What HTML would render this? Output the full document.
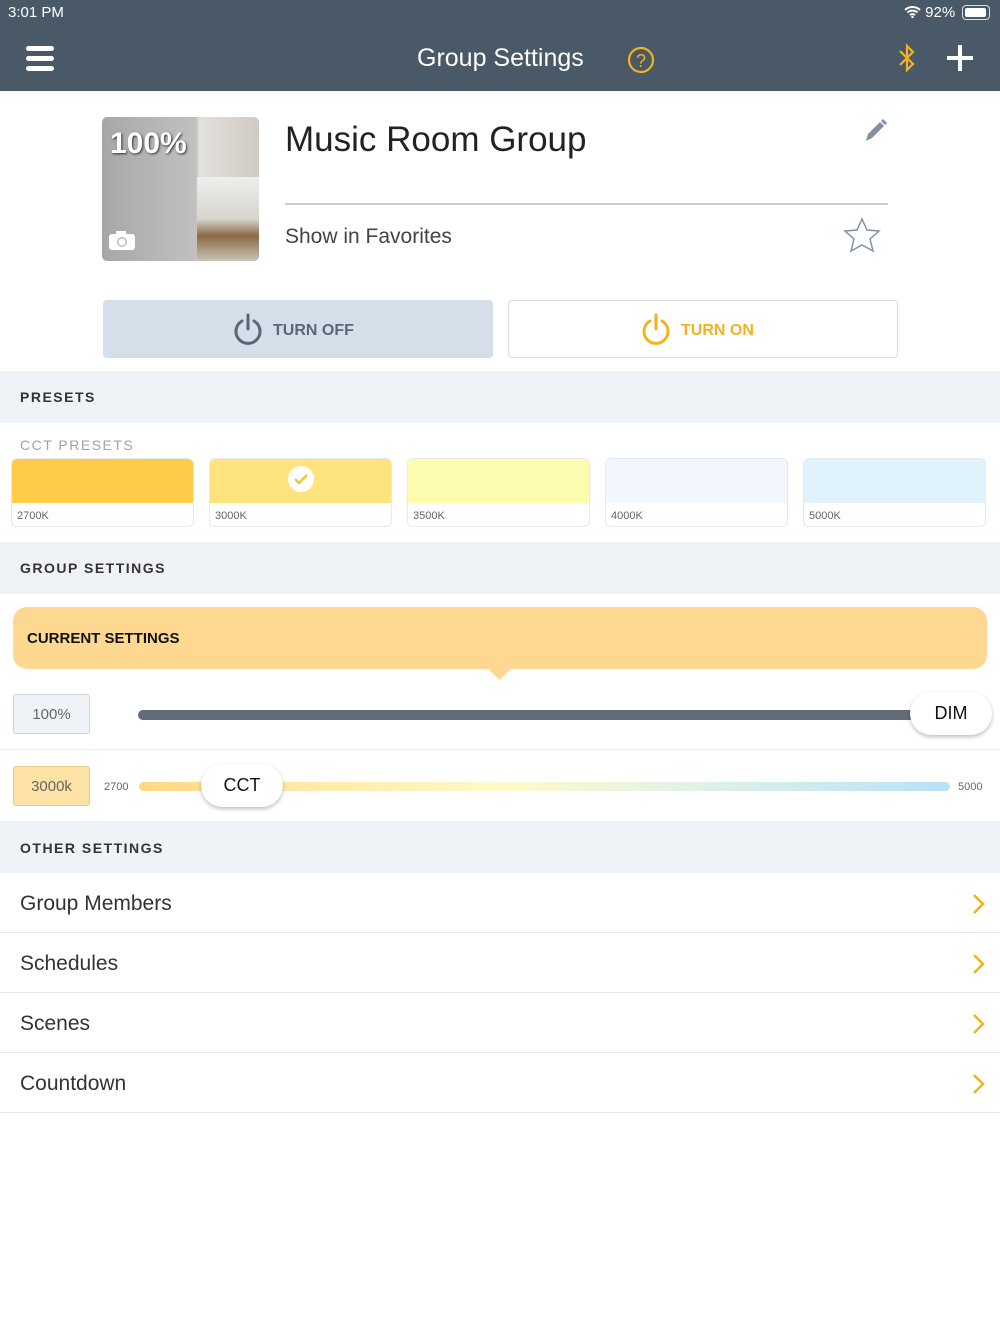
<!DOCTYPE html>
<html><head><meta charset="utf-8"><style>
*{box-sizing:border-box;margin:0;padding:0}
body{width:1000px;height:1334px;background:#fff;font-family:"Liberation Sans",sans-serif;position:relative;overflow:hidden;color:#222}
.abs{position:absolute}
.hdr{left:0;top:0;width:1000px;height:91px;background:#4a5968}
.sec{left:0;width:1000px;background:#eff2f7;font-size:14px;font-weight:bold;letter-spacing:1.5px;color:#333;padding-left:20px}
.preset{top:458px;width:183px;height:69px;border:1px solid #e6e9ed;border-radius:6px;overflow:hidden;background:#fff}
.preset div{height:44px}
.preset span{position:absolute;left:5px;top:51px;font-size:11px;color:#666}
.row{left:0;width:1000px;height:60px;border-bottom:1px solid #e4e6ea;font-size:21px;color:#333;padding-left:20px;line-height:62px}
.chev{position:absolute;right:14px;top:20px}
</style></head><body>
<div class="abs hdr"></div>
<div class="abs" style="left:8px;top:4px;color:#fff;font-size:15px">3:01 PM</div>
<div class="abs" style="left:904px;top:4px;color:#fff;font-size:15px">
<svg width="17" height="13" viewBox="0 0 17 13" style="vertical-align:-1px"><path d="M1 5a11 11 0 0 1 15 0M3.5 7.5a7.5 7.5 0 0 1 10 0M6 10a4 4 0 0 1 5 0" stroke="#fff" stroke-width="2" fill="none"/><circle cx="8.5" cy="12" r="1.2" fill="#fff"/></svg> 92%</div>
<div class="abs" style="left:962px;top:5px;width:28px;height:15px;border:1.5px solid #ddd;border-radius:4px;padding:1.5px"><div style="width:21px;height:9px;background:#fff;border-radius:2px"></div></div>
<div class="abs" style="left:26px;top:46px;width:28px;height:5px;background:#fff;border-radius:3px"></div>
<div class="abs" style="left:26px;top:56px;width:28px;height:5px;background:#fff;border-radius:3px"></div>
<div class="abs" style="left:26px;top:66px;width:28px;height:5px;background:#fff;border-radius:3px"></div>
<div class="abs" style="left:417px;top:44px;color:#fff;font-size:25px">Group Settings</div>
<svg class="abs" style="left:627px;top:46px" width="28" height="28" viewBox="0 0 28 28"><circle cx="14" cy="14" r="12" stroke="#f5b21f" stroke-width="2.2" fill="none"/><text x="14" y="21" text-anchor="middle" font-size="18" fill="#f5b21f" font-family="Liberation Sans">?</text></svg>
<svg class="abs" style="left:897px;top:43px" width="20" height="30" viewBox="0 0 20 30"><path d="M3 8l13 13-6 6V3l6 6L3 22" stroke="#f5b21f" stroke-width="2.2" fill="none"/></svg>
<svg class="abs" style="left:946px;top:44px" width="28" height="28"><path d="M14 1v26M1 14h26" stroke="#fff" stroke-width="4"/></svg>

<div class="abs" style="left:102px;top:117px;width:157px;height:144px;border-radius:5px;overflow:hidden;background:linear-gradient(90deg,#a8a7a5 0%,#c2c1bf 60%,#e3e1dc 62%,#cfcac2 100%)">
<div style="position:absolute;left:95px;top:60px;width:62px;height:84px;background:linear-gradient(#eee 0%,#d8d4ce 50%,#8b6a45 70%,#c9c3b8 100%)"></div>
<div style="position:absolute;left:8px;top:10px;color:#fff;font-size:30px;font-weight:bold;text-shadow:1px 1px 2px #333">100%</div>
<svg style="position:absolute;left:6px;top:112px" width="28" height="22"><rect x="1" y="5" width="26" height="16" rx="3" fill="#fff"/><rect x="8" y="2" width="10" height="5" fill="#fff"/><circle cx="14" cy="13" r="5" fill="#bbb"/><circle cx="14" cy="13" r="3.5" fill="#fff"/></svg>
</div>
<div class="abs" style="left:285px;top:120px;font-size:35px;color:#222">Music Room Group</div>
<svg class="abs" style="left:862px;top:117px" width="26" height="26" viewBox="0 0 26 26"><path d="M4 24l2-7L18 5l4 4L10 21z" fill="#8390a3"/><path d="M19 4l2-2 4 4-2 2z" fill="#8390a3"/></svg>
<div class="abs" style="left:285px;top:203px;width:603px;height:2px;background:#ccc"></div>
<div class="abs" style="left:285px;top:225px;font-size:21px;color:#444">Show in Favorites</div>
<svg class="abs" style="left:843px;top:217px" width="38" height="36" viewBox="0 0 38 36"><path d="M19 2l5 11 12 1-9 8 3 12-11-6-11 6 3-12-9-8 12-1z" stroke="#8390a3" stroke-width="1.5" fill="none"/></svg>

<div class="abs" style="left:103px;top:300px;width:390px;height:58px;background:#d5dfea;border-radius:4px"></div>
<svg class="abs" style="left:232px;top:313px" width="32" height="33" viewBox="0 0 32 33"><path d="M10 8a12 12 0 1 0 12 0" stroke="#5d6673" stroke-width="3" fill="none" stroke-linecap="round"/><path d="M16 2v14" stroke="#5d6673" stroke-width="3" stroke-linecap="round"/></svg>
<div class="abs" style="left:273px;top:322px;font-size:16px;font-weight:bold;color:#5d6673">TURN OFF</div>
<div class="abs" style="left:508px;top:300px;width:390px;height:58px;background:#fff;border:1px solid #d8dde3;border-radius:4px"></div>
<svg class="abs" style="left:640px;top:313px" width="32" height="33" viewBox="0 0 32 33"><path d="M10 8a12 12 0 1 0 12 0" stroke="#f5b21f" stroke-width="3" fill="none" stroke-linecap="round"/><path d="M16 2v14" stroke="#f5b21f" stroke-width="3" stroke-linecap="round"/></svg>
<div class="abs" style="left:681px;top:322px;font-size:16px;font-weight:bold;color:#f5b21f">TURN ON</div>

<div class="abs sec" style="top:371px;height:52px;line-height:52px">PRESETS</div>
<div class="abs" style="left:20px;top:437px;font-size:14px;letter-spacing:1.5px;color:#9aa3ae">CCT PRESETS</div>
<div class="abs preset" style="left:11px"><div style="background:#ffcc4a"></div><span>2700K</span></div>
<div class="abs preset" style="left:209px"><div style="background:#ffe37f"></div><span>3000K</span>
<svg style="position:absolute;left:77px;top:6px" width="28" height="28"><circle cx="14" cy="14" r="13" fill="#fff"/><path d="M8 14l4 4 8-8" stroke="#f0c540" stroke-width="2.5" fill="none"/></svg></div>
<div class="abs preset" style="left:407px"><div style="background:#fdfdb0"></div><span>3500K</span></div>
<div class="abs preset" style="left:605px"><div style="background:#f1f7fc"></div><span>4000K</span></div>
<div class="abs preset" style="left:803px"><div style="background:#e0f2fc"></div><span>5000K</span></div>

<div class="abs sec" style="top:542px;height:52px;line-height:52px">GROUP SETTINGS</div>
<div class="abs" style="left:13px;top:607px;width:974px;height:62px;background:#fed890;border-radius:14px;padding-left:14px;line-height:64px;font-size:15px;font-weight:bold;color:#111">CURRENT SETTINGS</div>
<div class="abs" style="left:492px;top:662px;width:15px;height:15px;background:#fed890;transform:rotate(45deg)"></div>
<div class="abs" style="left:13px;top:694px;width:77px;height:40px;background:#eff3f8;border:1.5px solid #cdd3da;border-radius:3px;text-align:center;line-height:40px;font-size:15px;color:#666">100%</div>
<div class="abs" style="left:138px;top:710px;width:790px;height:10px;background:#626b78;border-radius:5px"></div>
<div class="abs" style="left:910px;top:692px;width:82px;height:43px;background:#fff;border-radius:22px;box-shadow:0 2px 4px rgba(0,0,0,.25);text-align:center;line-height:43px;font-size:18px;color:#111">DIM</div>
<div class="abs" style="left:0;top:749px;width:1000px;height:1px;background:#eceef1"></div>
<div class="abs" style="left:13px;top:766px;width:77px;height:40px;background:#fee2a6;border:1.5px solid #e8c887;border-radius:3px;text-align:center;line-height:40px;font-size:15px;color:#666">3000k</div>
<div class="abs" style="left:104px;top:781px;font-size:11px;color:#666">2700</div>
<div class="abs" style="left:139px;top:782px;width:811px;height:9px;border-radius:5px;background:linear-gradient(90deg,#ffd883 0%,#ffe9a6 20%,#fefac8 45%,#e6f3e4 65%,#b8e2f8 100%)"></div>
<div class="abs" style="left:958px;top:781px;font-size:11px;color:#666">5000</div>
<div class="abs" style="left:201px;top:764px;width:82px;height:43px;background:#fff;border-radius:22px;box-shadow:0 2px 4px rgba(0,0,0,.25);text-align:center;line-height:43px;font-size:18px;color:#111">CCT</div>

<div class="abs sec" style="top:821px;height:52px;line-height:54px">OTHER SETTINGS</div>
<div class="abs row" style="top:873px">Group Members<svg class="chev" width="14" height="22"><path d="M2 2l9 9-9 9" stroke="#f5b21f" stroke-width="2.5" fill="none"/></svg></div>
<div class="abs row" style="top:933px">Schedules<svg class="chev" width="14" height="22"><path d="M2 2l9 9-9 9" stroke="#f5b21f" stroke-width="2.5" fill="none"/></svg></div>
<div class="abs row" style="top:993px">Scenes<svg class="chev" width="14" height="22"><path d="M2 2l9 9-9 9" stroke="#f5b21f" stroke-width="2.5" fill="none"/></svg></div>
<div class="abs row" style="top:1053px">Countdown<svg class="chev" width="14" height="22"><path d="M2 2l9 9-9 9" stroke="#f5b21f" stroke-width="2.5" fill="none"/></svg></div>
</body></html>
